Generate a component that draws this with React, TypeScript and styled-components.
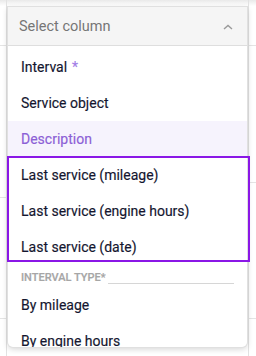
import styled, { createGlobalStyle } from "styled-components";

const GlobalStyle = createGlobalStyle`
  html, body {
    margin: 0;
    padding: 0;
    background: #ffffff;
    font-family: Roboto, "Liberation Sans", sans-serif;
  }
`;

const Page = styled.div`
  position: relative;
  width: 256px;
  height: 356px;
  overflow: hidden;
  background: #fff;
`;

// table behind the open menu
const Table = styled.div`
  display: grid;
  grid-template-columns: 7px 1fr 8px;
  height: 356px;
  background: linear-gradient(#e9e9e9, #fff 6px);
`;

const Side = styled.div<{ $right?: boolean }>`
  display: flex;
  flex-direction: column;
  border-${p => (p.$right ? "left" : "right")}: 1px solid #e2e2e2;
`;

const Cell = styled.div<{ $h: number }>`
  height: ${p => p.$h}px;
  flex-shrink: 0;
  border-bottom: 1px solid #e4e4e4;
`;

const Menu = styled.div`
  position: absolute;
  left: 8px;
  top: 7px;
  width: 239px;
  height: 340px;
  background: #fff;
  border-radius: 0 0 5px 5px;
  box-shadow: 0 0 0 1px #e0e0e0, 0 2px 6px rgba(0, 0, 0, 0.18);
  display: flex;
  flex-direction: column;
`;

const Header = styled.div`
  height: 39px;
  flex-shrink: 0;
  box-sizing: border-box;
  display: flex;
  align-items: center;
  justify-content: space-between;
  padding: 1px 14px 0 11px;
  background: #f5f5f5;
  border-bottom: 1px solid #dedede;
  color: #757575;
  font-size: 14.5px;
`;

const List = styled.div`
  flex: 1;
  min-height: 0;
  display: flex;
  flex-direction: column;
  padding-top: 3px;
  overflow-x: visible;
  overflow-y: clip;
`;

const Option = styled.div<{ $active?: boolean }>`
  height: 36px;
  flex-shrink: 0;
  display: flex;
  align-items: center;
  padding-left: 13px;
  font-size: 14px;
  color: ${p => (p.$active ? "#8c5fd6" : "#14162f")};
  background: ${p => (p.$active ? "#f6f3fd" : "transparent")};
  -webkit-text-stroke: 0.15px currentColor;
`;

const Star = styled.span`
  color: #a07be6;
  margin-left: 5px;
`;

// highlighted group: the purple frame is drawn over the rows
const Group = styled.div`
  position: relative;
  display: flex;
  flex-direction: column;

  &::after {
    content: "";
    position: absolute;
    top: -1px;
    bottom: 3px;
    left: -1px;
    right: -3px;
    border: 2px solid #8a17e6;
    pointer-events: none;
  }
`;

const Section = styled.div`
  height: 22px;
  flex-shrink: 0;
  box-sizing: border-box;
  display: flex;
  align-items: center;
  gap: 2px;
  padding: 2px 13px 0 13px;
  font-size: 11px;
  font-weight: 500;
  color: #a6a6a6;
  text-transform: uppercase;
  -webkit-text-stroke: 0.2px currentColor;
`;

const Rule = styled.div`
  flex: 1;
  height: 1px;
  background: #d6d6d6;
  margin-top: 12px;
`;

const Chevron = () => (
  <svg width="10" height="6" viewBox="0 0 10 6">
    <path d="M1 5L5 1.5L9 5" fill="none" stroke="#9a9a9a" strokeWidth="1.4" />
  </svg>
);

export default function App() {
  return (
    <Page>
      <GlobalStyle />
      <Table>
        <Side>
          <Cell $h={45} />
          <Cell $h={151} />
          <Cell $h={120} />
        </Side>
        <div />
        <Side $right>
          <Cell $h={45} />
          <Cell $h={136} />
          <Cell $h={135} />
        </Side>
      </Table>
      <Menu>
        <Header>
          <span>Select column</span>
          <Chevron />
        </Header>
        <List>
          <Option>
            Interval<Star>*</Star>
          </Option>
          <Option>Service object</Option>
          <Option $active>Description</Option>
          <Group>
            <Option>Last service (mileage)</Option>
            <Option>Last service (engine hours)</Option>
            <Option>Last service (date)</Option>
          </Group>
          <Section>
            Interval type*
            <Rule />
          </Section>
          <Option>By mileage</Option>
          <Option>By engine hours</Option>
        </List>
      </Menu>
    </Page>
  );
}
